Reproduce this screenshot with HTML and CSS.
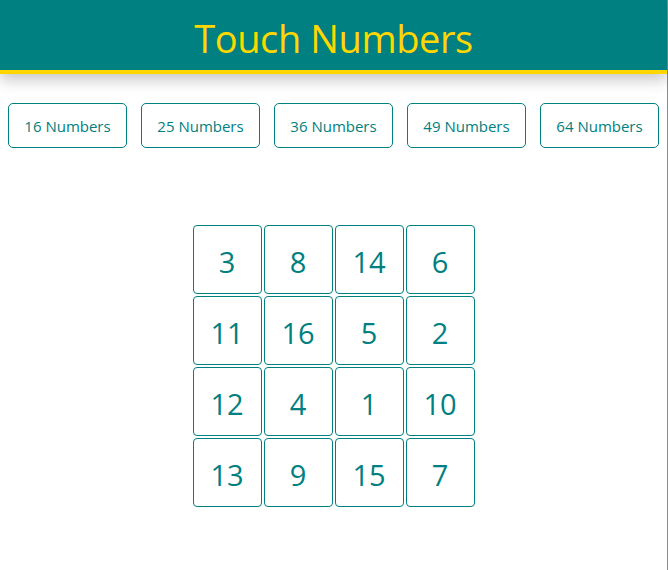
FILE: index.html
```html
<!DOCTYPE html>
<html>
<head>
<meta charset="utf-8">
<link rel="stylesheet" href="styles.css">
</head>
<body>
<div class="page">
  <header class="header"><h1 class="title">Touch Numbers</h1></header>
  <div class="levels">
    <button class="level">16 Numbers</button>
    <button class="level">25 Numbers</button>
    <button class="level">36 Numbers</button>
    <button class="level">49 Numbers</button>
    <button class="level">64 Numbers</button>
  </div>
  <div class="board">
    <div class="cell">3</div><div class="cell">8</div><div class="cell">14</div><div class="cell">6</div>
    <div class="cell">11</div><div class="cell">16</div><div class="cell">5</div><div class="cell">2</div>
    <div class="cell">12</div><div class="cell">4</div><div class="cell">1</div><div class="cell">10</div>
    <div class="cell">13</div><div class="cell">9</div><div class="cell">15</div><div class="cell">7</div>
  </div>
</div>
</body>
</html>
```
FILE: styles.css
```css
html, body {
  margin: 0;
  padding: 0;
  background: #fff;
}
body {
  font-family: "Open Sans", "Noto Sans", sans-serif;
}
.page {
  width: 667px;
  height: 570px;
  border-right: 1px solid #8a8a8a;
  box-sizing: content-box;
}
.header {
  height: 70px;
  background: #008080;
  border-bottom: 4px solid #ffd700;
  box-shadow: 0 6px 14px rgba(0,0,0,0.22);
  display: flex;
  align-items: center;
  justify-content: center;
}
.title {
  margin: 0;
  color: #ffd700;
  font-weight: 400;
  font-size: 38px;
  letter-spacing: -0.4px;
  padding-top: 6px;
}
.levels {
  display: flex;
  gap: 14px;
  padding: 29px 8px 0;
}
.level {
  width: 119px;
  height: 45px;
  background: #fff;
  border: 1px solid #008080;
  border-radius: 5px;
  color: #008080;
  font-family: "Open Sans", "Noto Sans", sans-serif;
  font-size: 15px;
  letter-spacing: 0;
  padding: 0;
}
.board {
  display: grid;
  grid-template-columns: repeat(4, 69px);
  grid-auto-rows: 69px;
  gap: 2px;
  width: max-content;
  margin: 77px auto 0;
}
.cell {
  border: 1px solid #008080;
  border-radius: 4px;
  display: flex;
  align-items: center;
  justify-content: center;
  color: #008080;
  font-size: 29px;
  padding-top: 3px;
  box-sizing: border-box;
}
```
